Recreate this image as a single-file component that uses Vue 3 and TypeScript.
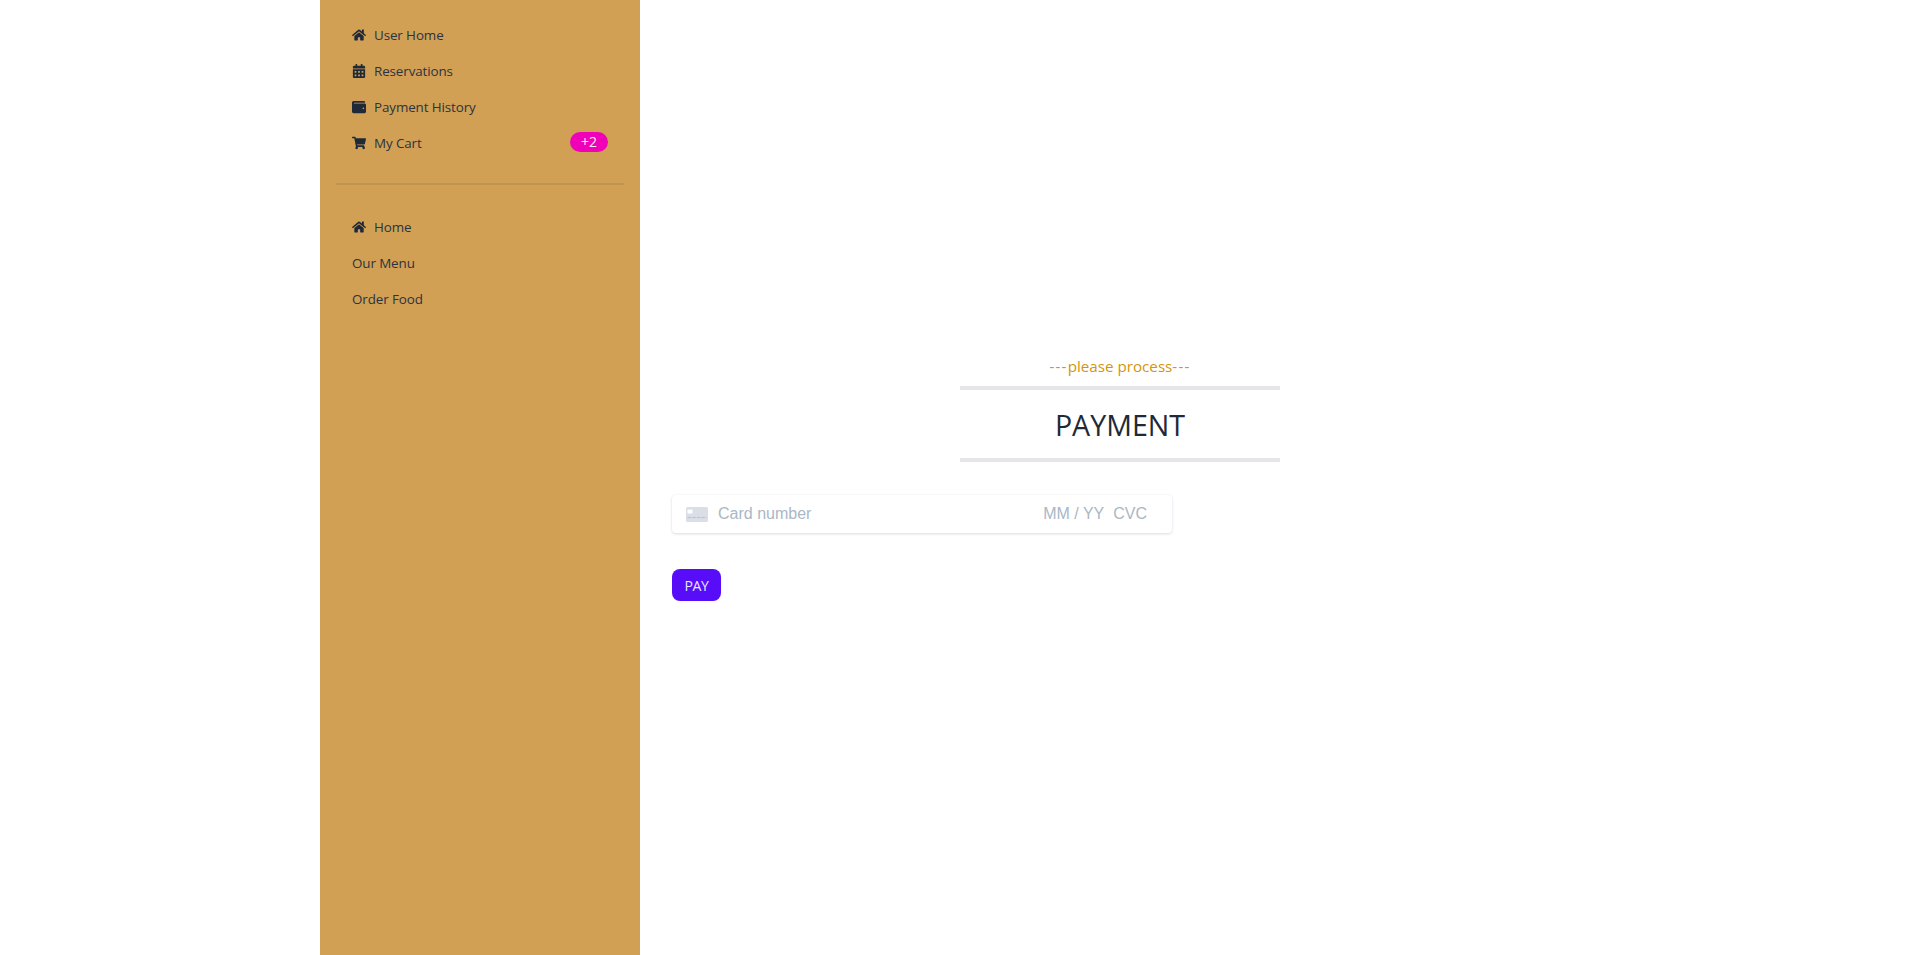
<script setup lang="ts">
interface NavItem {
  label: string
  icon?: 'home' | 'calendar' | 'wallet' | 'cart'
  badge?: string
}

const userMenu: NavItem[] = [
  { label: 'User Home', icon: 'home' },
  { label: 'Reservations', icon: 'calendar' },
  { label: 'Payment History', icon: 'wallet' },
  { label: 'My Cart', icon: 'cart', badge: '+2' },
]

const mainMenu: NavItem[] = [
  { label: 'Home', icon: 'home' },
  { label: 'Our Menu' },
  { label: 'Order Food' },
]

const icons = {
  home: {
    box: '0 0 576 512',
    d: 'M280.37 148.26L96 300.11V464a16 16 0 0 0 16 16l112.06-.29a16 16 0 0 0 15.92-16V368a16 16 0 0 1 16-16h64a16 16 0 0 1 16 16v95.64a16 16 0 0 0 16 16.05L464 480a16 16 0 0 0 16-16V300L295.67 148.26a12.19 12.19 0 0 0-15.3 0zM571.6 251.47L488 182.56V44.05a12 12 0 0 0-12-12h-56a12 12 0 0 0-12 12v72.61L318.47 43a48 48 0 0 0-61 0L4.34 251.47a12 12 0 0 0-1.6 16.9l25.5 31A12 12 0 0 0 45.15 301l235.22-193.74a12.19 12.19 0 0 1 15.3 0L530.9 301a12 12 0 0 0 16.9-1.6l25.5-31a12 12 0 0 0-1.7-16.93z',
  },
  calendar: {
    box: '0 0 448 512',
    d: 'M0 464c0 26.5 21.5 48 48 48h352c26.5 0 48-21.5 48-48V192H0v272zm320-196c0-6.6 5.4-12 12-12h40c6.6 0 12 5.4 12 12v40c0 6.6-5.4 12-12 12h-40c-6.6 0-12-5.4-12-12v-40zm0 128c0-6.6 5.4-12 12-12h40c6.6 0 12 5.4 12 12v40c0 6.6-5.4 12-12 12h-40c-6.6 0-12-5.4-12-12v-40zM192 268c0-6.6 5.4-12 12-12h40c6.6 0 12 5.4 12 12v40c0 6.6-5.4 12-12 12h-40c-6.6 0-12-5.4-12-12v-40zm0 128c0-6.6 5.4-12 12-12h40c6.6 0 12 5.4 12 12v40c0 6.6-5.4 12-12 12h-40c-6.6 0-12-5.4-12-12v-40zM64 268c0-6.6 5.4-12 12-12h40c6.6 0 12 5.4 12 12v40c0 6.6-5.4 12-12 12H76c-6.6 0-12-5.4-12-12v-40zm0 128c0-6.6 5.4-12 12-12h40c6.6 0 12 5.4 12 12v40c0 6.6-5.4 12-12 12H76c-6.6 0-12-5.4-12-12v-40zM400 64h-48V16c0-8.8-7.2-16-16-16h-32c-8.8 0-16 7.2-16 16v48H160V16c0-8.8-7.2-16-16-16h-32c-8.8 0-16 7.2-16 16v48H48C21.5 64 0 85.5 0 112v48h448v-48c0-26.5-21.5-48-48-48z',
  },
  wallet: {
    box: '0 0 512 512',
    d: 'M461.2 128H80c-8.84 0-16-7.16-16-16s7.16-16 16-16h384c8.84 0 16-7.16 16-16 0-26.51-21.49-48-48-48H64C28.65 32 0 60.65 0 96v320c0 35.35 28.65 64 64 64h397.2c28.02 0 50.8-21.53 50.8-48V176c0-26.47-22.78-48-50.8-48zM416 336c-17.67 0-32-14.33-32-32s14.33-32 32-32 32 14.33 32 32-14.33 32-32 32z',
  },
  cart: {
    box: '0 0 576 512',
    d: 'M528.12 301.319l47.273-208C578.806 78.301 567.391 64 551.99 64H159.208l-9.166-44.81C147.758 8.021 137.93 0 126.529 0H24C10.745 0 0 10.745 0 24v16c0 13.255 10.745 24 24 24h69.883l70.248 343.435C147.325 417.1 136 435.222 136 456c0 30.928 25.072 56 56 56s56-25.072 56-56c0-15.674-6.447-29.835-16.824-40h209.647C430.447 426.165 424 440.326 424 456c0 30.928 25.072 56 56 56s56-25.072 56-56c0-22.172-12.888-41.332-31.579-50.405l5.517-24.276c3.413-15.018-8.002-29.319-23.403-29.319H218.117l-6.545-32h293.145c11.206 0 20.92-7.754 23.403-18.681z',
  },
}
</script>

<template>
  <div class="shell">
    <aside class="sidebar">
      <ul class="menu">
        <li v-for="item in userMenu" :key="item.label" class="item">
          <svg v-if="item.icon" class="icon" :viewBox="icons[item.icon].box"><path :d="icons[item.icon].d" /></svg>
          <span>{{ item.label }}</span>
          <span v-if="item.badge" class="badge">{{ item.badge }}</span>
        </li>
      </ul>
      <div class="divider"></div>
      <ul class="menu">
        <li v-for="item in mainMenu" :key="item.label" class="item">
          <svg v-if="item.icon" class="icon" :viewBox="icons[item.icon].box"><path :d="icons[item.icon].d" /></svg>
          <span>{{ item.label }}</span>
        </li>
      </ul>
    </aside>
    <main class="content">
      <div class="title-block">
        <p class="subtitle"><span class="dash">---</span>please process<span class="dash">---</span></p>
        <h2 class="title">PAYMENT</h2>
      </div>
      <form class="pay-form" @submit.prevent>
        <div class="card-field">
          <svg class="card-icon" viewBox="0 0 22 15">
            <rect width="22" height="15" rx="1.5" fill="#dadfe7" />
            <rect x="1.5" y="2.5" width="5" height="4" rx="0.8" fill="#ffffff" />
            <line x1="1.5" y1="10.5" x2="20.5" y2="10.5" stroke="#b9c1cd" stroke-width="1.2" stroke-dasharray="3.6 1" />
          </svg>
          <span class="ph number">Card number</span>
          <span class="ph">MM / YY</span>
          <span class="ph cvc">CVC</span>
        </div>
        <button class="pay-btn" type="submit">PAY</button>
      </form>
    </main>
  </div>
</template>

<style>
html,
body {
  margin: 0;
  background: #ffffff;
}
</style>

<style scoped>
.shell {
  display: flex;
  width: 1280px;
  margin: 0 auto;
  min-height: 955px;
  font-family: "Open Sans", "Noto Sans", sans-serif;
  color: #1f2937;
}
.sidebar {
  width: 320px;
  flex: none;
  background: #d1a054;
}
.menu {
  list-style: none;
  margin: 0;
  padding: 17px 16px 15px;
}
.item {
  display: flex;
  align-items: center;
  gap: 8px;
  padding: 8px 16px;
  font-size: 13.4px;
  letter-spacing: -0.1px;
  line-height: 20px;
  color: #2a3341;
}
.icon {
  width: 14px;
  height: 14px;
  flex: none;
  fill: #1f2937;
}
.badge {
  margin: -1px 0 1px auto;
  width: 38px;
  height: 20px;
  border-radius: 10px;
  background: #f000b8;
  color: #ffeef9;
  text-align: center;
  font-size: 14px;
  letter-spacing: 0;
}
.divider {
  height: 2px;
  margin: 7px 16px;
  background: #bf9350;
}
.content {
  flex: 1;
  display: flex;
  flex-direction: column;
  justify-content: center;
}
.title-block {
  width: 320px;
  margin: 0 auto;
  text-align: center;
}
.subtitle {
  margin: 0 0 8px;
  font-size: 15.2px;
  line-height: 24px;
  color: #d2960c;
}
.dash {
  letter-spacing: 1.2px;
}
.title {
  margin: 0;
  padding: 17px 0 15px;
  border-top: 4px solid #e5e6e9;
  border-bottom: 4px solid #e5e6e9;
  font-size: 28.6px;
  line-height: 36px;
  font-weight: 400;
}
.pay-form {
  padding: 33px 32px 0;
}
.card-field {
  box-sizing: border-box;
  width: 500px;
  height: 38px;
  display: flex;
  align-items: center;
  padding: 0 14px;
  border-radius: 4px;
  background: #ffffff;
  box-shadow: 0 1px 3px 0 #d9dee8, 0 0 2px 0 #f0f2f5;
  font-family: "Liberation Sans", Arial, sans-serif;
  font-size: 16px;
}
.card-icon {
  width: 22px;
  height: 15px;
  margin-right: 10px;
}
.ph {
  color: #aab7c4;
}
.number {
  flex: 1;
}
.cvc {
  margin-left: 9px;
  margin-right: 11px;
}
.pay-btn {
  display: block;
  margin-top: 36px;
  width: 49px;
  height: 32px;
  padding: 1px 0 0;
  border: none;
  border-radius: 8px;
  background: #570df8;
  color: #ede4fe;
  font-family: "Open Sans", sans-serif;
  font-size: 14px;
  letter-spacing: -0.4px;
}
</style>
